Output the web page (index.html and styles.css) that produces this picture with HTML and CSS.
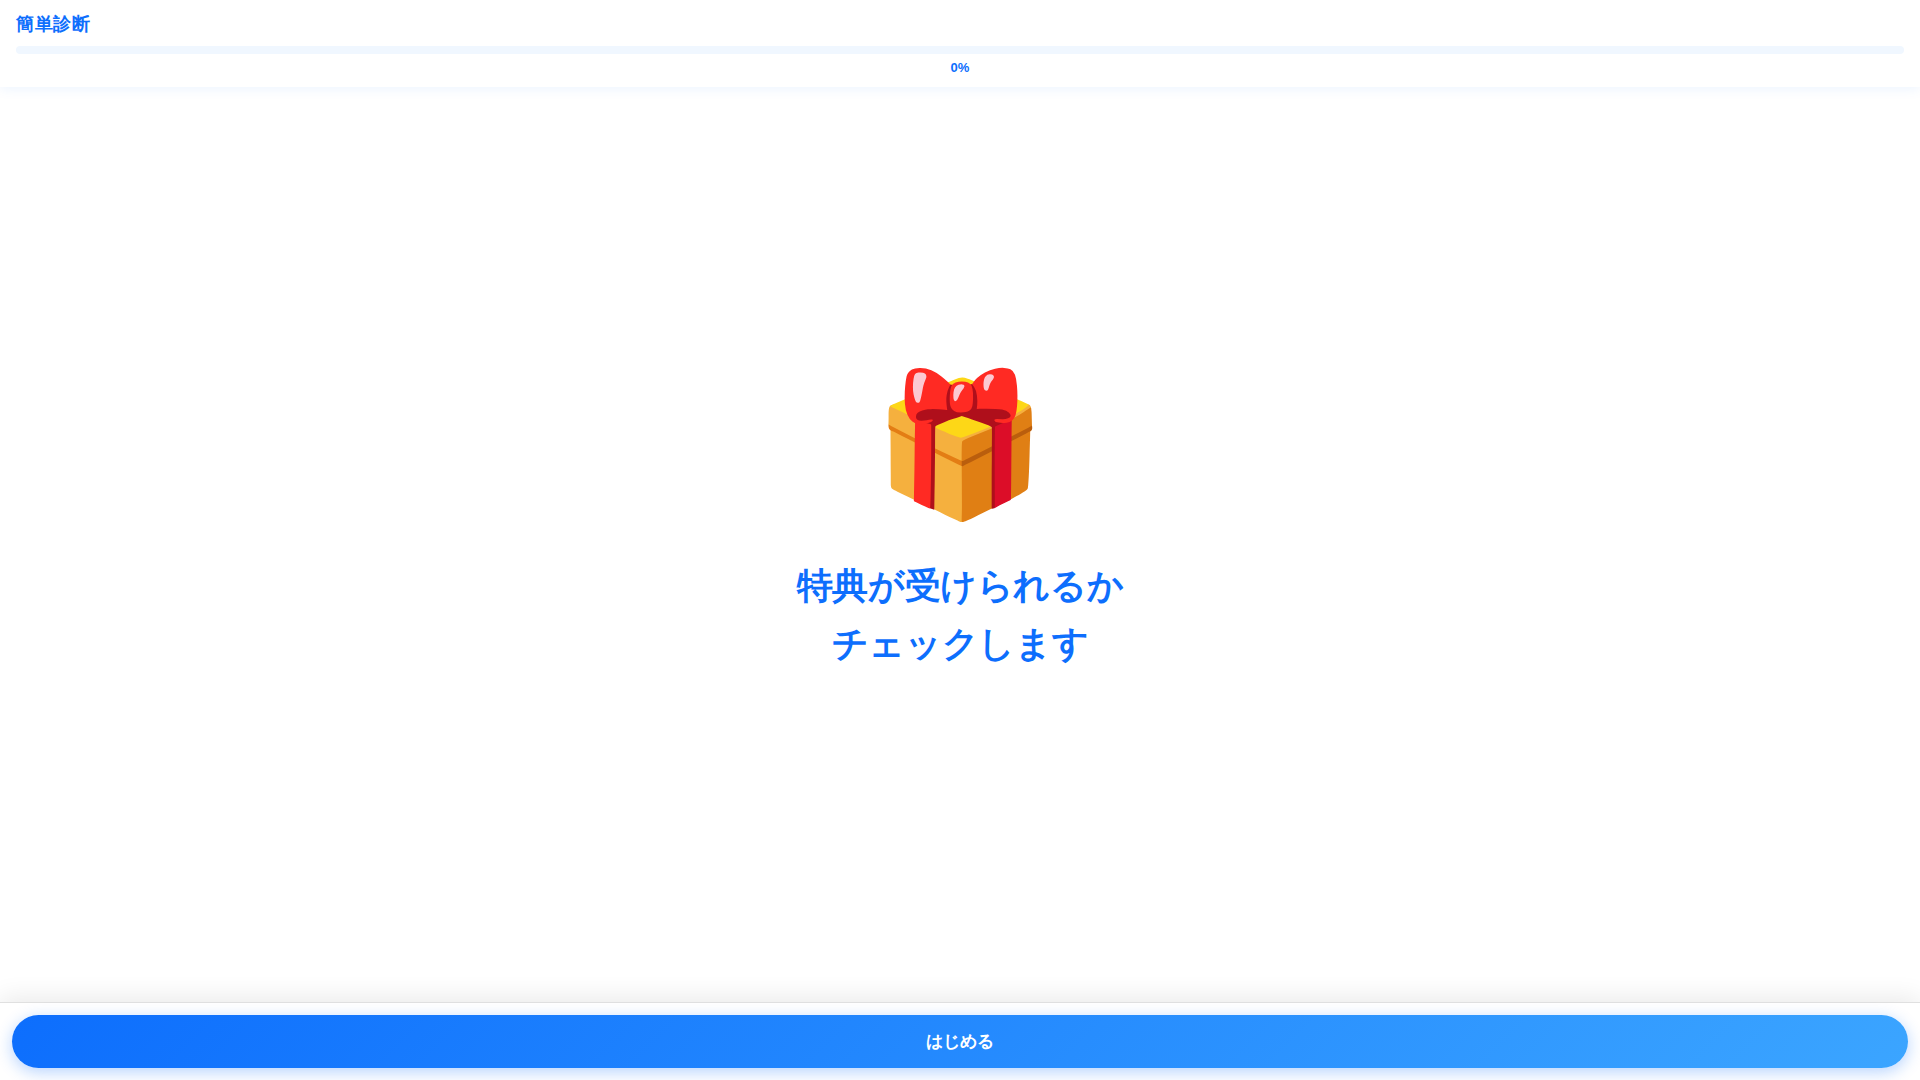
FILE: index.html
```html
<!DOCTYPE html>
<html lang="ja">
<head>
<meta charset="utf-8">
<meta name="viewport" content="width=device-width, initial-scale=1">
<title>簡単診断</title>
<link rel="stylesheet" href="styles.css">
</head>
<body>
<header class="header">
  <div class="header-title">簡単診断</div>
  <div class="progress-bar" role="progressbar" aria-label="進捗" aria-valuemin="0" aria-valuemax="100" aria-valuenow="0">
    <div class="progress-fill" style="width: 0%"></div>
  </div>
  <div class="progress-text">0%</div>
</header>
<main class="intro">
  <div class="intro-icon">🎁</div>
  <h1 class="intro-title">特典が受けられるか<br>チェックします</h1>
</main>
<footer class="footer">
  <button class="start-button" type="button">はじめる</button>
</footer>
</body>
</html>
```

FILE: styles.css
```css
* {
  box-sizing: border-box;
  margin: 0;
  padding: 0;
}

body {
  display: flex;
  flex-direction: column;
  min-height: 100vh;
  background: #fff;
  color: #0d6efd;
  font-family: "Liberation Sans", sans-serif;
}

.header {
  padding: 12px 16px;
  background: #fff;
  box-shadow: 0 2px 12px rgba(13, 110, 253, 0.08);
}

.header-title {
  margin-bottom: 10px;
  font-size: 18px;
  font-weight: 700;
  line-height: 24px;
  letter-spacing: 0.03em;
}

.progress-bar {
  height: 8px;
  overflow: hidden;
  border-radius: 4px;
  background: #f0f7ff;
}

.progress-fill {
  height: 100%;
  background: #0d6efd;
}

.progress-text {
  margin-top: 6px;
  font-size: 13px;
  font-weight: 700;
  line-height: 15px;
  text-align: center;
}

.intro {
  display: flex;
  flex: 1;
  flex-direction: column;
  align-items: center;
  justify-content: center;
  gap: 32px;
  padding-bottom: 52px;
  text-align: center;
}

.intro-icon {
  font-size: 140px;
  line-height: 160px;
}

.intro-title {
  font-size: 36px;
  font-weight: 700;
  line-height: 58px;
  letter-spacing: -0.01em;
}

.footer {
  padding: 12px;
  border-top: 1px solid #e0e0e0;
  background: #fff;
  box-shadow: 0 -4px 24px rgba(0, 0, 0, 0.09);
}

.start-button {
  display: block;
  width: 100%;
  padding: 16px;
  border: 0;
  border-radius: 28px;
  background: linear-gradient(135deg, #0d6efd, #3ba5ff);
  box-shadow: 0 4px 16px rgba(13, 110, 253, 0.3);
  color: #fff;
  font-family: inherit;
  font-size: 17px;
  font-weight: 700;
  line-height: 21px;
  cursor: pointer;
}
```
